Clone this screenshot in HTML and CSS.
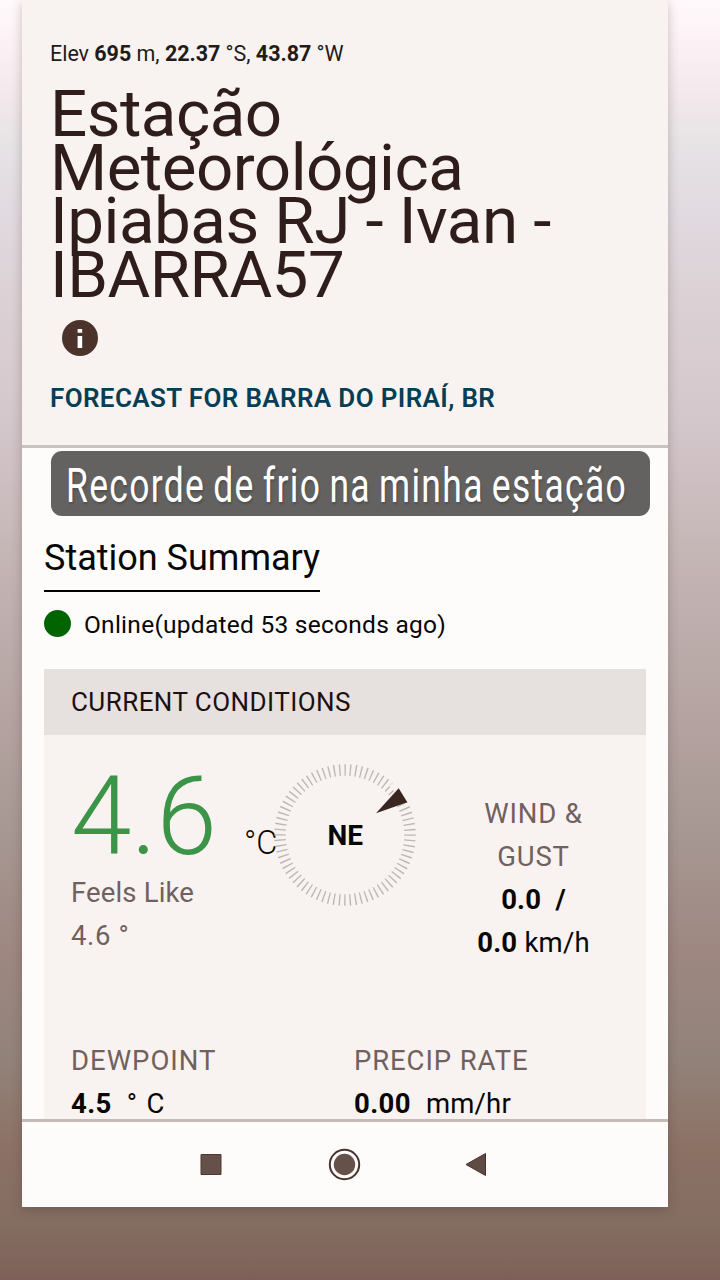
FILE: index.html
```html
<!DOCTYPE html>
<html lang="pt">
<head>
<meta charset="utf-8">
<title>Estação Meteorológica Ipiabas</title>
<link rel="stylesheet" href="styles.css">
</head>
<body>
<main class="phone">
  <header class="station">
    <p class="coords">Elev <b>695</b> m, <b>22.37</b> °S, <b>43.87</b> °W</p>
    <h1 class="title">Estação<br>Meteorológica<br>Ipiabas RJ - Ivan -<br>IBARRA57</h1>
    <svg class="info" viewBox="0 0 36 36"><circle cx="18" cy="18" r="18" fill="#4b332c"/><path d="M15.6 9h4.600v3.800h-4.600zM15.600 16h4.600v12h-4.600z" fill="#fff"/></svg>
    <a class="forecast">FORECAST FOR BARRA DO PIRAÍ, BR</a>
  </header>
  <div class="caption"><span class="caption-text">Recorde de frio na minha estação</span></div>
  <section class="summary">
    <h2 class="heading"><span class="heading-text">Station Summary</span></h2>
    <div class="status"><i class="dot"></i><span class="status-text">Online(updated 53 seconds ago)</span></div>
    <div class="panel">
      <div class="panel-head"><span class="panel-title">CURRENT CONDITIONS</span></div>
      <div class="current">
        <div class="temperature">
          <div class="reading"><span class="degrees">4.6</span><span class="unit">°C</span></div>
          <p class="label feels">Feels Like</p>
          <p class="label feels-value">4.6 °</p>
        </div>
        <svg class="compass" viewBox="0 0 142 142">
          <circle cx="71" cy="71" r="65" fill="none" stroke="#bcb6b4" stroke-width="11.5" pathLength="760" stroke-dasharray="2.5 7.5" stroke-dashoffset="1"/>
          <path class="gap" d="M115 22l16 16 8-5-15-18z"/>
          <path d="M124.7 24.3L133.3 38.3 102 49.3z" fill="#3b2521"/>
          <text class="direction" x="71.300" y="80.500">NE</text>
        </svg>
        <div class="wind">
          <span class="label wind-label">WIND &amp;</span>
          <span class="label wind-label">GUST</span>
          <span class="gust"><b>0.0</b>&nbsp; <b>/</b></span>
          <span><b>0.0</b> km/h</span>
        </div>
      </div>
      <div class="metrics">
        <div class="metric"><span class="label dew">DEWPOINT</span><span class="value"><b>4.5</b><span class="deg">°</span><span>C</span></span></div>
        <div class="metric"><span class="label precip">PRECIP RATE</span><span class="value"><b>0.00</b><span class="rate">mm/hr</span></span></div>
      </div>
    </div>
  </section>
  <nav class="nav">
    <svg class="nav-icons" viewBox="0 0 646 85">
      <path d="M179 32.5h20v20h-20z" fill="#66504a" stroke="#4d3832"/>
      <circle cx="322.500" cy="42.500" r="14.700" fill="none" stroke="#45332f" stroke-width="2"/>
      <circle cx="322.500" cy="42.500" r="10.700" fill="#66504a"/>
      <path d="M444 42.500L463.500 31.500v22z" fill="#604b44" stroke="#45332f"/>
    </svg>
  </nav>
</main>
</body>
</html>
```
FILE: styles.css
```css
* { box-sizing: border-box; margin: 0; }
body {
  height: 1280px; padding: 0 52px 0 22px; overflow: hidden;
  font-family: Roboto, sans-serif; color: #080606;
  background: linear-gradient(#fff9fc 0, #fcf2f5 40px, #f3e8eb 95px, #e6e3e5 145px, #e1dae0 210px, #dacfd2 320px, #d5c8cd 410px, #c5b6b6 550px, #b3a29f 730px, #a79893 830px, #9e8781 950px, #92837a 1055px, #8c7165 1150px, #846d61 1225px, #7d6158 1280px);
}
b { font-weight: 700; }
.phone { position: relative; display: flex; flex-direction: column; height: 1207px; background: #fdfcfb; box-shadow: 0 3px 10px rgba(65, 45, 45, .28); white-space: nowrap; }
.station { display: flex; flex-direction: column; align-items: flex-start; height: 448px; padding: 39px 28px 0; background: #f8f3f0; border-bottom: 3px solid #c6c2bf; }
.coords { font-size: 21.5px; line-height: 30px; letter-spacing: -.03px; color: #211b1a; }
.title { margin-top: 18px; font-size: 65.5px; line-height: 53.7px; letter-spacing: -.53px; font-weight: 400; color: #2e1d1a; }
.info { width: 36px; height: 36px; margin: 18px 0 0 12px; }
.forecast { margin-top: 27px; font-size: 26px; line-height: 30px; letter-spacing: .37px; font-weight: 600; color: #053e55; }
.caption { position: absolute; left: 29px; top: 451px; width: 599px; height: 65px; padding-left: 15px; border-radius: 11px; background: #636260; color: #fff; }
.caption-text { display: inline-block; font-size: 35.500px; font-weight: 430; line-height: 50px; letter-spacing: 1.300px; word-spacing: -2px; transform: scaleY(1.370); transform-origin: 0 0; text-shadow: 1px 2px 2px rgba(0, 0, 0, .2); }
.summary { height: 671px; padding: 90px 22px 0; overflow: hidden; }
.heading { display: flex; font-weight: 400; }
.heading-text { width: 276px; height: 54px; font-size: 36px; line-height: 40px; border-bottom: 2px solid #000; }
.status { display: flex; align-items: center; gap: 13px; height: 63px; }
.dot { width: 27px; height: 27px; border-radius: 50%; background: #006400; }
.status-text { font-size: 24.5px; line-height: 30px; letter-spacing: .260px; padding-top: 2px; }
.panel { height: 460px; margin-top: 14px; background: #f8f3f0; }
.panel-head { height: 66px; padding-left: 27px; background: #e6e0de; }
.panel-title { font-size: 26px; line-height: 67px; letter-spacing: .450px; color: #1b1110; }
.current { display: grid; grid-template-columns: 203px 142px 1fr; height: 304px; padding: 29px 0 0 27px; }
.reading { display: flex; align-items: baseline; height: 107px; }
.degrees { flex: none; width: 173px; font-size: 109px; line-height: 106px; letter-spacing: -.5px; font-weight: 300; color: #3c9448; }
.unit { flex: none; font-size: 32.500px; line-height: 38px; font-weight: 300; }
.label { color: #70615e; }
.temperature p, .wind, .metric { font-size: 27.500px; line-height: 43px; }
.feels { letter-spacing: .150px; }
.feels-value { letter-spacing: .600px; }
.compass { width: 142px; height: 142px; }
.gap { fill: #f8f3f0; }
.direction { font-size: 28px; font-weight: 700; text-anchor: middle; fill: #080606; }
.wind { display: flex; flex-direction: column; align-items: center; padding: 28px 0 0 5px; letter-spacing: .220px; }
.wind-label { letter-spacing: .850px; }
.metrics { display: grid; grid-template-columns: 283px 1fr; padding-left: 27px; }
.metric { display: flex; flex-direction: column; align-items: flex-start; }
.dew { letter-spacing: 1px; }
.precip { letter-spacing: .900px; }
.value { display: flex; letter-spacing: .400px; }
.deg { margin: 0 9px 0 15px; }
.rate { margin-left: 15px; letter-spacing: .200px; }
.nav { height: 88px; border-top: 3px solid #c4bab8; background: #fdfcfb; }
.nav-icons { display: block; width: 646px; height: 85px; }
```
